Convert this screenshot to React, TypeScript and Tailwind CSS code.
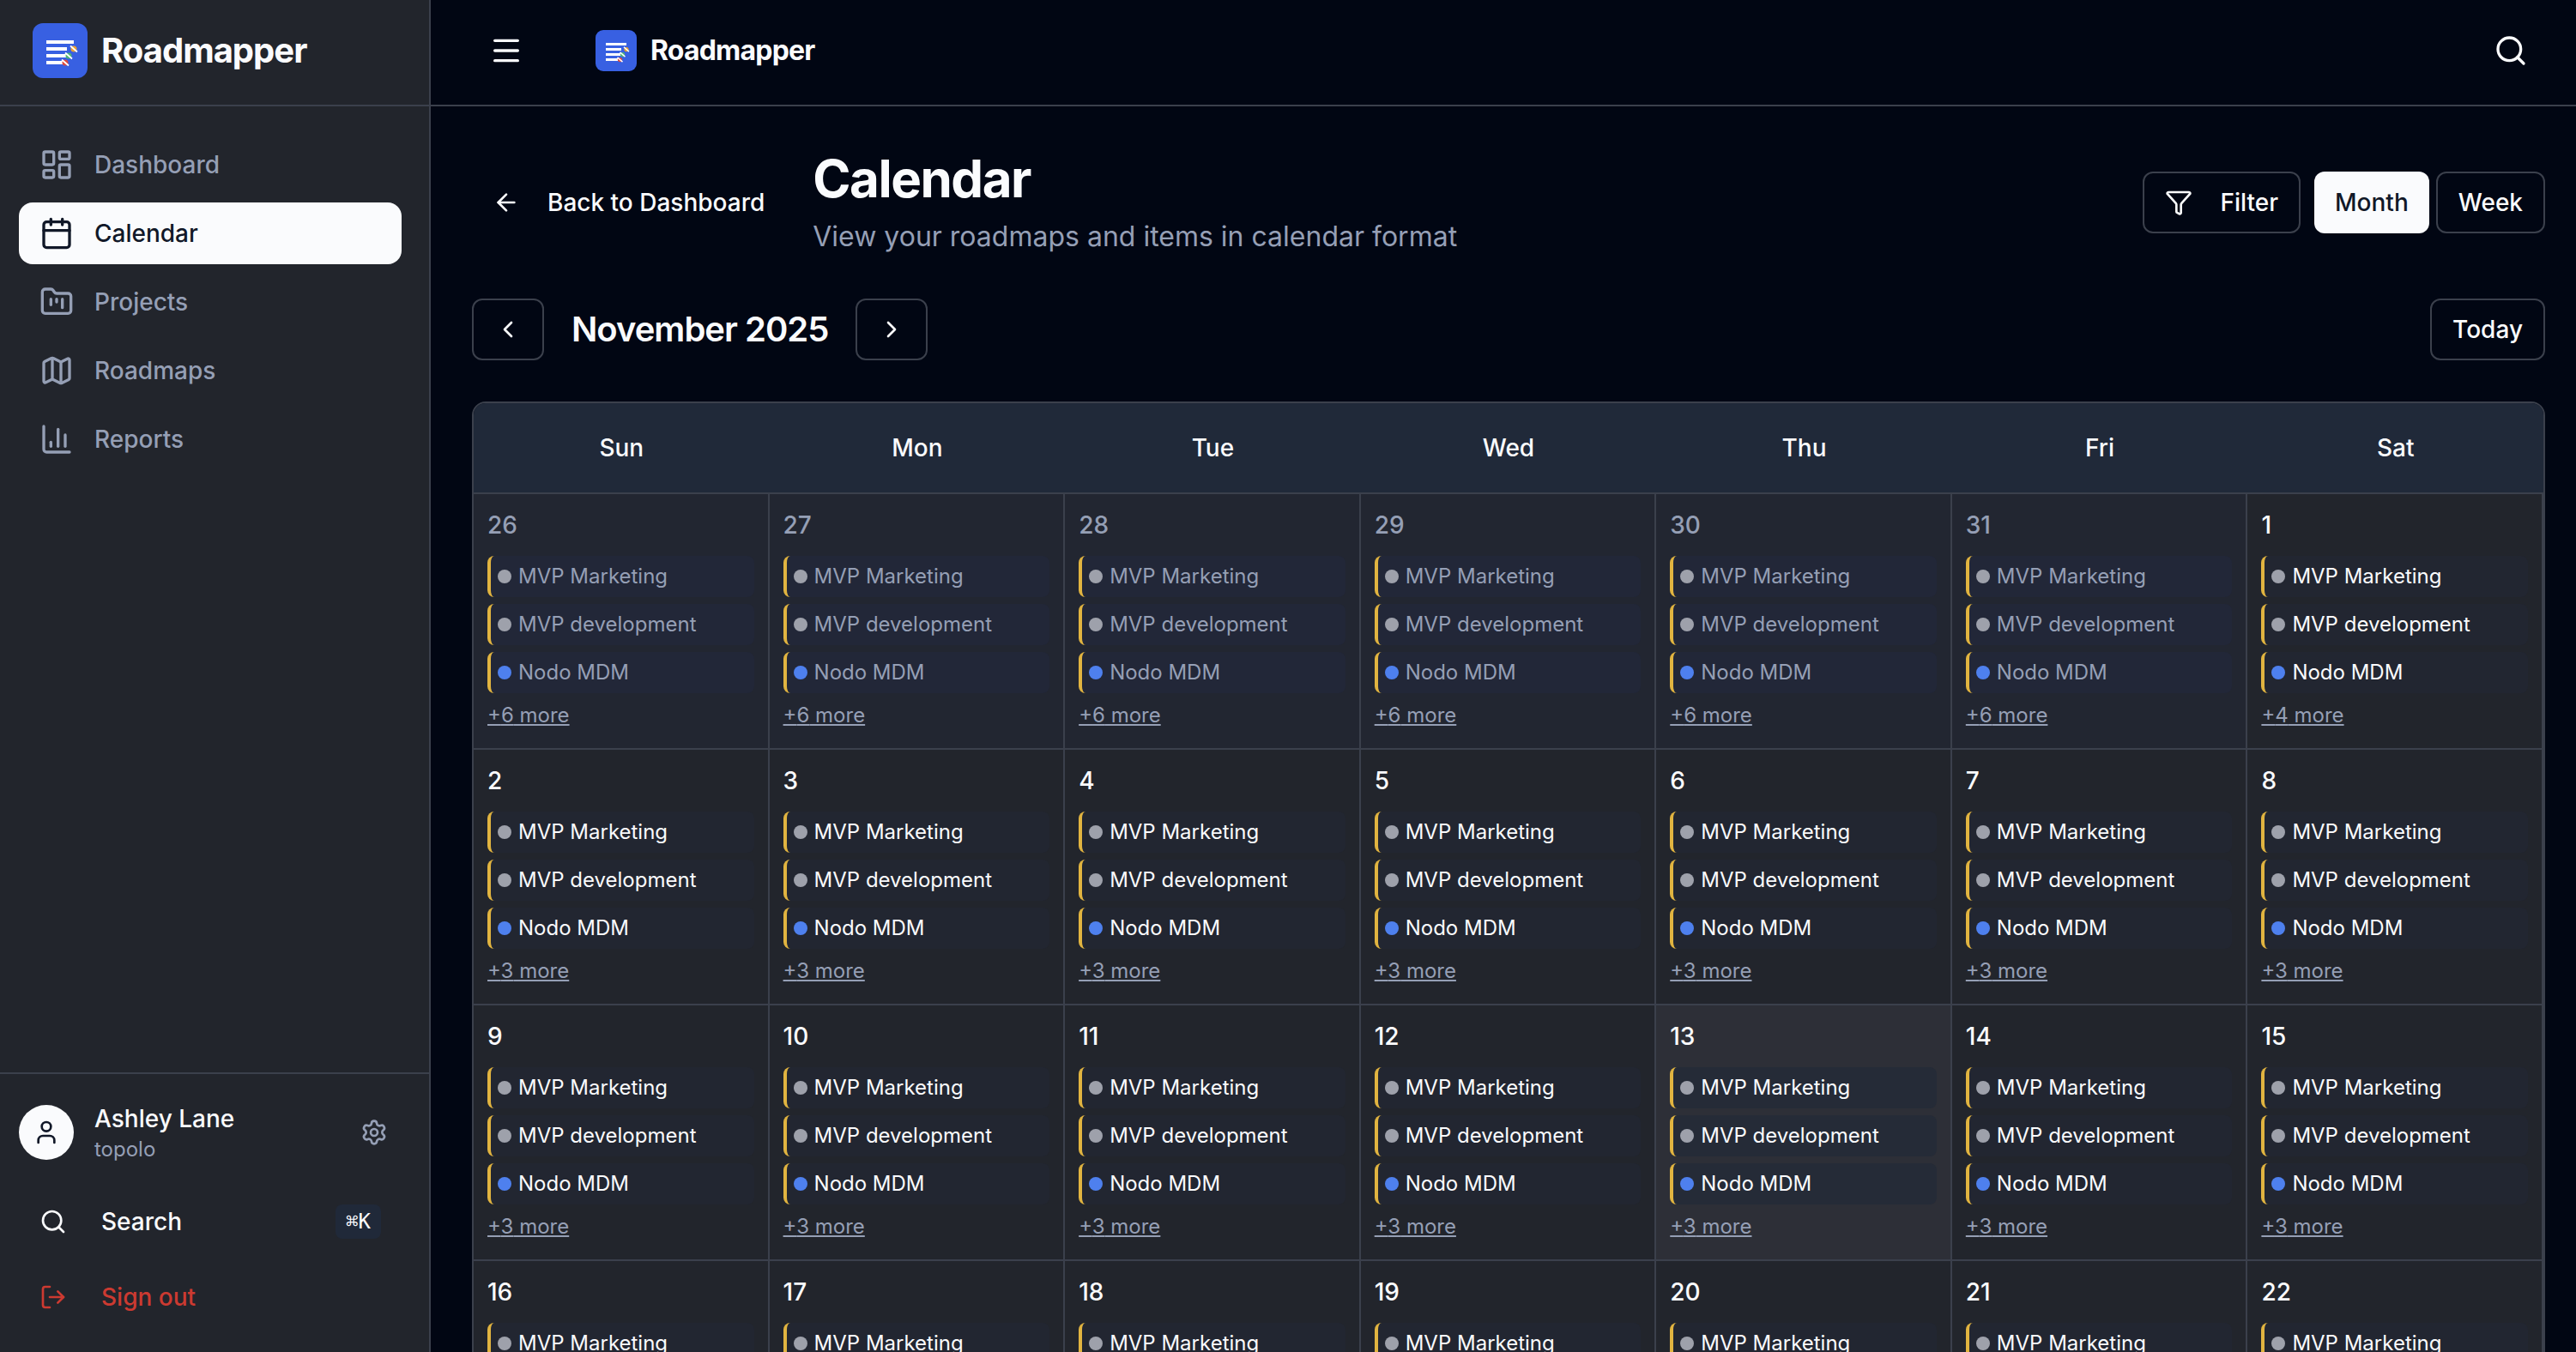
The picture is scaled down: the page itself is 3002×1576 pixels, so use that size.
import {
  ArrowLeft,
  Calendar,
  ChartColumn,
  ChevronLeft,
  ChevronRight,
  FolderKanban,
  Funnel,
  LayoutDashboard,
  LogOut,
  Map,
  Menu,
  Search,
  Settings,
  User,
} from "lucide-react";
import clsx from "clsx";

const navItems = [
  { label: "Dashboard", icon: LayoutDashboard },
  { label: "Calendar", icon: Calendar, active: true },
  { label: "Projects", icon: FolderKanban },
  { label: "Roadmaps", icon: Map },
  { label: "Reports", icon: ChartColumn },
];

const weekdays = ["Sun", "Mon", "Tue", "Wed", "Thu", "Fri", "Sat"];

const events = [
  { title: "MVP Marketing", dot: "bg-[#9ea1ab]" },
  { title: "MVP development", dot: "bg-[#9ea1ab]" },
  { title: "Nodo MDM", dot: "bg-[#4e80ee]" },
];

interface Day {
  date: number;
  more: number;
  outside: boolean;
  today: boolean;
}

// Six weeks, starting on Sunday 26 October 2025
const weeks: Day[][] = Array.from({ length: 6 }, (_, week) =>
  Array.from({ length: 7 }, (_, weekday) => {
    const offset = week * 7 + weekday - 5;
    const outside = offset < 1 || offset > 30;
    const date = offset < 1 ? offset + 31 : offset > 30 ? offset - 30 : offset;
    return {
      date,
      more: offset < 1 ? 6 : offset === 1 ? 4 : 3,
      outside,
      today: offset === 13,
    };
  })
);

function Logo({ className }: { className?: string }) {
  return (
    <svg viewBox="0 0 64 64" className={className} aria-hidden="true">
      <rect width="64" height="64" rx="12" fill="#3860e2" />
      <g fill="#fff">
        <rect x="16" y="20" width="32" height="4" />
        <rect x="16" y="28" width="24" height="4" />
        <rect x="16" y="36" width="23" height="4" />
        <rect x="16" y="44" width="20" height="4" />
      </g>
      <circle cx="48" cy="30" r="3.5" fill="#e8a033" />
      <circle cx="42" cy="38" r="3.5" fill="#4fb477" />
      <circle cx="38" cy="46" r="3.5" fill="#dc4a3d" />
      <g stroke="#fff" strokeWidth="1.8">
        <path d="M44 26.5l8 7" />
        <path d="M38 34.5l8 7" />
        <path d="M34 42.5l8 7" />
      </g>
    </svg>
  );
}

const outlineButton =
  "flex h-18 items-center rounded-xl border-2 border-[#3b404c] px-6 text-[28px] font-medium";

function Sidebar() {
  return (
    <aside className="flex w-[502px] shrink-0 flex-col border-r-2 border-[#3b404c] bg-[#22252c]">
      <div className="flex h-31 items-center gap-4 border-b-2 border-[#3b404c] pb-1 pl-[38px]">
        <Logo className="size-16" />
        <span className="text-[40px] font-bold tracking-tight">Roadmapper</span>
      </div>

      <nav className="flex flex-1 flex-col gap-2 pt-8 pr-8 pl-[22px]">
        {navItems.map(({ label, icon: Icon, active }) => (
          <a
            key={label}
            href="#"
            className={clsx(
              "flex h-18 items-center gap-6 rounded-2xl px-6 text-[28px] font-medium",
              active ? "bg-[#fafbfd] text-[#111828]" : "text-[#959fb5]"
            )}
          >
            <Icon className="size-10" />
            {label}
          </a>
        ))}
      </nav>

      <div className="border-t-2 border-[#3b404c] pt-8 pr-8 pb-7 pl-[22px]">
        <div className="flex items-center">
          <div className="flex size-16 items-center justify-center rounded-full bg-[#fafbfd] text-[#111828]">
            <User className="size-8" />
          </div>
          <div className="ml-6 flex-1">
            <p className="text-[28px] leading-10 font-medium">Ashley Lane</p>
            <p className="text-2xl text-[#959fb5]">topolo</p>
          </div>
          <button type="button" aria-label="Settings" className="p-4 text-[#959fb5]">
            <Settings className="size-8" />
          </button>
        </div>
        <button
          type="button"
          className="mt-8 flex h-18 w-full items-center px-6 text-[28px] font-medium"
        >
          <Search className="size-8" />
          <span className="ml-10">Search</span>
          <kbd className="ml-auto flex h-10 items-center rounded-lg bg-[#202939] px-3 font-['DejaVu_Sans_Mono',monospace] text-2xl font-normal">
            ⌘K
          </kbd>
        </button>
        <button
          type="button"
          className="mt-4 flex h-18 w-full items-center px-6 text-[28px] font-medium text-[#cc3a31]"
        >
          <LogOut className="size-8" />
          <span className="ml-10">Sign out</span>
        </button>
      </div>
    </aside>
  );
}

function DayCell({ day }: { day: Day }) {
  return (
    <td
      className={clsx(
        "border-r-2 border-b-2 border-[#3b404c] px-4 pt-4 pb-5 align-top",
        day.today ? "bg-[#2d2f37]" : day.outside ? "bg-[#222631]" : "bg-[#22252c]",
        day.outside && "text-[#959fb5]"
      )}
    >
      <div className="mb-4 text-[28px] leading-10 font-medium">{day.date}</div>
      <ul className="flex flex-col gap-2">
        {events.map((event) => (
          <li
            key={event.title}
            className={clsx(
              "flex h-12 items-center gap-2 rounded-lg border-l-4 border-[#e1b440] px-2 text-2xl",
              day.today ? "bg-[#252b37]" : day.outside ? "bg-[#222738]" : "bg-[#222631]"
            )}
          >
            <span className={clsx("size-4 shrink-0 rounded-full", event.dot)} />
            <span className="truncate">{event.title}</span>
          </li>
        ))}
      </ul>
      <button
        type="button"
        className="mt-2 block text-2xl leading-9 text-[#959fb5] underline"
      >
        +{day.more} more
      </button>
    </td>
  );
}

export default function App() {
  return (
    <div className="flex h-screen overflow-hidden bg-[#010613] font-[Inter,sans-serif] text-[#fafbfd]">
      <Sidebar />

      <div className="flex min-w-0 flex-1 flex-col">
        <header className="flex h-31 shrink-0 items-center border-b-2 border-[#3b404c] pr-9 pb-1 pl-12">
          <button type="button" aria-label="Toggle menu" className="p-5">
            <Menu className="size-10" />
          </button>
          <div className="ml-16 flex items-center gap-4">
            <Logo className="size-12" />
            <span className="text-[32px] font-bold tracking-tight">Roadmapper</span>
          </div>
          <button type="button" aria-label="Search" className="ml-auto p-5">
            <Search className="size-10" />
          </button>
        </header>

        <main className="flex-1 overflow-y-auto pt-12 pr-9 pb-12 pl-12 [scrollbar-width:none]">
          <div className="flex items-center justify-between">
            <div className="flex items-center gap-8">
              <a href="#" className="flex h-18 items-center gap-8 px-6 text-[28px] font-medium">
                <ArrowLeft className="size-8" />
                Back to Dashboard
              </a>
              <div>
                <h1 className="text-6xl leading-18 font-bold tracking-tight">Calendar</h1>
                <p className="mt-2 text-[32px] leading-12 text-[#959fb5]">
                  View your roadmaps and items in calendar format
                </p>
              </div>
            </div>
            <div className="flex items-center gap-4">
              <button type="button" className={clsx(outlineButton, "gap-8")}>
                <Funnel className="size-8" />
                Filter
              </button>
              <div className="flex gap-2">
                <button
                  type="button"
                  className="h-18 rounded-xl bg-[#fafbfd] px-6 text-[28px] font-medium text-[#111828]"
                >
                  Month
                </button>
                <button type="button" className={outlineButton}>
                  Week
                </button>
              </div>
            </div>
          </div>

          <div className="mt-12 flex items-center justify-between">
            <div className="flex items-center gap-8">
              <button type="button" aria-label="Previous month" className={outlineButton}>
                <ChevronLeft className="size-8" />
              </button>
              <h2 className="text-[40px] font-semibold tracking-tight">November 2025</h2>
              <button type="button" aria-label="Next month" className={outlineButton}>
                <ChevronRight className="size-8" />
              </button>
            </div>
            <button type="button" className={outlineButton}>
              Today
            </button>
          </div>

          <div className="mt-12 overflow-hidden rounded-2xl border-2 border-[#3b404c]">
            <table className="w-full table-fixed border-separate border-spacing-0">
              <thead>
                <tr className="bg-[#202939]">
                  {weekdays.map((name) => (
                    <th
                      key={name}
                      className="border-b-2 border-[#3b404c] py-8 text-[28px] leading-10 font-medium"
                    >
                      {name}
                    </th>
                  ))}
                </tr>
              </thead>
              <tbody>
                {weeks.map((week, index) => (
                  <tr key={index}>
                    {week.map((day) => (
                      <DayCell key={day.date} day={day} />
                    ))}
                  </tr>
                ))}
              </tbody>
            </table>
          </div>
        </main>
      </div>
    </div>
  );
}
